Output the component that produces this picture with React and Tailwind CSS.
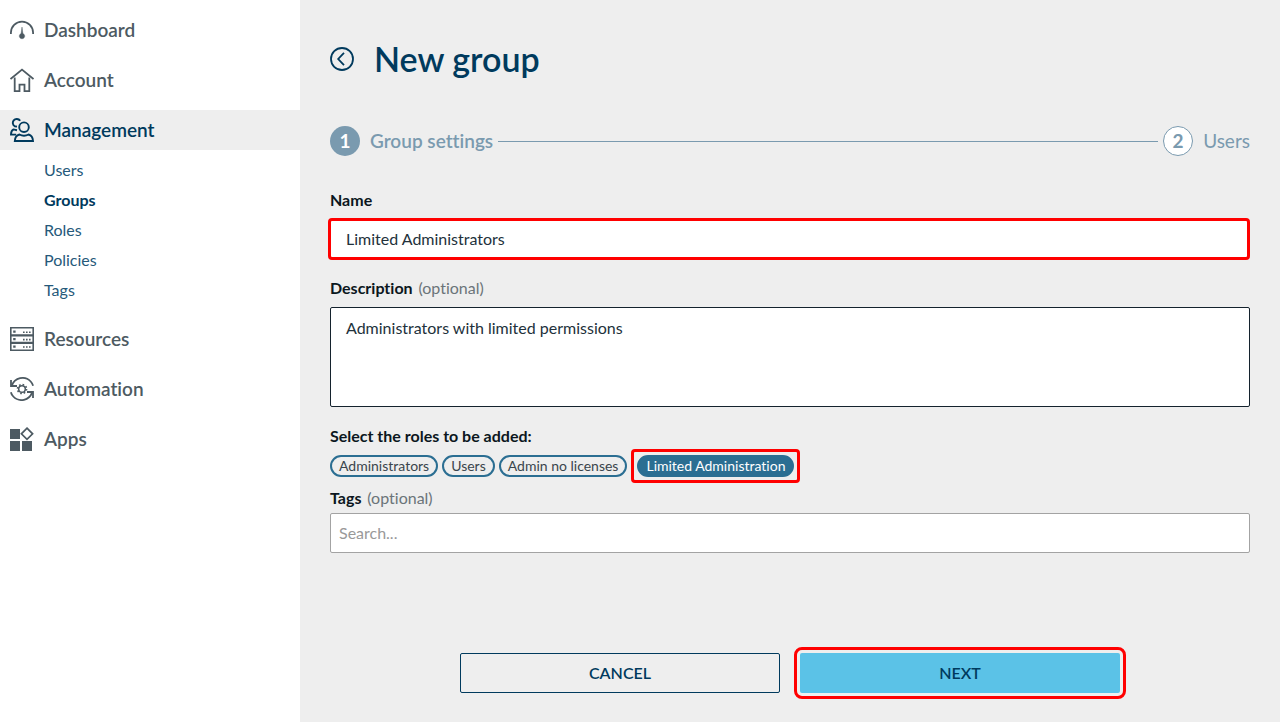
import { useState } from 'react'
import clsx from 'clsx'

function DashboardIcon() {
  return (
    <svg viewBox="0 0 24 24" className="size-6 shrink-0" fill="none" stroke="currentColor" strokeWidth="1.8" aria-hidden="true">
      <path d="M.9 16v-1.200a11.100 11.100 0 0 1 22.200 0V16" />
      <path d="M12 9l.9 6.500a2.700 2.700 0 1 1-1.800 0z" fill="currentColor" strokeWidth=".4" />
    </svg>
  )
}

function AccountIcon() {
  return (
    <svg viewBox="0 0 24 24" className="size-6 shrink-0" fill="none" stroke="currentColor" strokeWidth="1.8" aria-hidden="true">
      <path d="M.5 11L12 1.600 23.500 11" />
      <path d="M4.700 9.500v13.600h4.800v-6.500h5v6.500h4.800V9.500" />
    </svg>
  )
}

function ManagementIcon() {
  return (
    <svg viewBox="0 0 24 24" className="size-6 shrink-0" fill="none" stroke="currentColor" strokeWidth="1.9" aria-hidden="true">
      <circle cx="14" cy="9.200" r="4.800" />
      <path d="M4.800 23c.2-3.600 1.700-5.800 4.600-6.500 3 1.600 6.200 1.600 9.200 0 2.900.7 4.200 2.900 4.400 6.500z" />
      <path d="M10.200 2.800C8.600.6 5.300.4 3.700 2.400c-1.500 1.900-1 4.700 1.100 5.900l2.200.3" />
      <path d="M7 12.200l-3.500-.8C1.800 12.300 1 14 1 16.600h5.200" />
    </svg>
  )
}

function ResourcesIcon() {
  return (
    <svg viewBox="0 0 24 24" className="size-6 shrink-0" fill="none" stroke="currentColor" strokeWidth="1.6" aria-hidden="true">
      <path d="M.8.800h22.400v22.400H.8z" />
      <path d="M.8 8.300h22.400M.8 15.800h22.400" strokeWidth="2.200" />
      <path d="M3.200 4.700h2.400M3.200 12.200h2.400M3.200 19.600h2.400" strokeWidth="2.200" />
      <path d="M13 5.200h8M13 12.600h8M13 20h8" strokeDasharray="1.600 1.400" />
    </svg>
  )
}

function AutomationIcon() {
  return (
    <svg viewBox="0 0 24 24" className="size-6 shrink-0" fill="none" stroke="currentColor" strokeWidth="1.8" aria-hidden="true">
      <path d="M1.900 8.400C4.700.9 14.600-1.900 20.700 4.500c1.200 1.300 2 2.600 2.400 4.300" />
      <path d="M1 3v6h6" />
      <path d="M22.100 15.600C19.300 23.100 9.400 25.900 3.300 19.500 2.100 18.200 1.300 16.900.9 15.200" />
      <path d="M23 21v-6h-6" />
      <circle cx="12" cy="12" r="3.300" strokeWidth="1.500" />
      <circle cx="12" cy="12" r="4.500" strokeWidth="1.700" strokeDasharray="1.600 1.934" />
    </svg>
  )
}

function AppsIcon() {
  return (
    <svg viewBox="0 0 24 24" className="size-6 shrink-0" fill="currentColor" aria-hidden="true">
      <path d="M0 2h10v10H0zM0 14h10v10H0zM12 14h10v10H12z" />
      <path d="M17 1.200l5.600 5.600-5.600 5.600-5.600-5.600z" fill="none" stroke="currentColor" strokeWidth="1.700" />
    </svg>
  )
}

const navItems = [
  { label: 'Dashboard', icon: DashboardIcon },
  { label: 'Account', icon: AccountIcon },
  {
    label: 'Management',
    icon: ManagementIcon,
    active: true,
    children: ['Users', 'Groups', 'Roles', 'Policies', 'Tags'],
  },
  { label: 'Resources', icon: ResourcesIcon },
  { label: 'Automation', icon: AutomationIcon },
  { label: 'Apps', icon: AppsIcon },
]

const roles = ['Administrators', 'Users', 'Admin no licenses', 'Limited Administration']

function Sidebar() {
  return (
    <nav className="w-[300px] shrink-0 bg-white pt-2.5">
      <ul className="space-y-2.5">
        {navItems.map(({ label, icon: Icon, active, children }) => (
          <li key={label}>
            <a
              href="#"
              className={clsx(
                'flex h-10 items-center gap-2.5 px-2.5 text-[19px] font-semibold',
                active ? 'bg-[#eeeeee] text-[#003a5d]' : 'text-[#4d5a62]'
              )}
            >
              <Icon />
              {label}
            </a>
            {children && (
              <ul className="pt-[5px] pb-1">
                {children.map((child) => (
                  <li key={child}>
                    <a
                      href="#"
                      className={clsx(
                        'flex h-[30px] items-center pl-11 text-base',
                        child === 'Groups' ? 'font-bold text-[#003a5d]' : 'text-[#26597a]'
                      )}
                    >
                      {child}
                    </a>
                  </li>
                ))}
              </ul>
            )}
          </li>
        ))}
      </ul>
    </nav>
  )
}

function Steps() {
  return (
    <ol className="mt-[47px] flex h-[30px] items-center text-[19px] text-[#7a9aaf]">
      <li className="flex items-center gap-2.5 font-semibold">
        <span className="flex size-[30px] items-center justify-center rounded-full bg-[#7a9aaf] font-bold text-white">1</span>
        Group settings
      </li>
      <li className="mx-[5px] h-px flex-1 bg-[#7a9aaf]" aria-hidden="true" />
      <li className="flex items-center gap-2.5">
        <span className="flex size-[30px] items-center justify-center rounded-full border border-[#7a9aaf] bg-white font-bold">2</span>
        Users
      </li>
    </ol>
  )
}

function RoleChip({ label, selected, onClick }) {
  const chip = (
    <button
      type="button"
      aria-pressed={selected}
      onClick={onClick}
      className={clsx(
        'h-[22px] rounded-full border-2 border-[#2b6e92] px-[7px] text-sm leading-[18px]',
        selected ? 'bg-[#2b6e92] text-white' : 'text-[#3a454c]'
      )}
    >
      {label}
    </button>
  )
  if (!selected) return chip
  return <span className="-my-1.5 flex rounded border-3 border-[#ff0000] p-[3px]">{chip}</span>
}

export default function App() {
  const [name, setName] = useState('Limited Administrators')
  const [description, setDescription] = useState('Administrators with limited permissions')
  const [selected, setSelected] = useState('Limited Administration')

  return (
    <div className="flex min-h-screen bg-[#eeeeee] font-['Lato','Open_Sans',sans-serif] [font-variant-ligatures:none]">
      <Sidebar />

      <main className="min-w-0 flex-1 px-[30px] pt-[39px]">
        <div className="flex h-10 items-center gap-5 text-[#003a5d]">
          <button type="button" aria-label="Back">
            <svg viewBox="0 0 24 24" className="size-6" fill="none" stroke="currentColor" strokeWidth="1.800" aria-hidden="true">
              <circle cx="12" cy="12" r="11" />
              <path d="M14 5.800L8.200 12l5.800 6.200" />
            </svg>
          </button>
          <h1 className="text-[34px] leading-10 font-semibold">New group</h1>
        </div>

        <Steps />

        <form onSubmit={(e) => e.preventDefault()} className="mt-[34px] text-base leading-5 text-[#22313b]">
          <label htmlFor="name" className="block font-bold text-[#0b1620]">Name</label>
          <div className="mt-2 -ml-0.5">
            <input
              id="name"
              value={name}
              onChange={(e) => setName(e.target.value)}
              className="block h-[42px] w-full rounded border-3 border-[#ff0000] bg-white px-[15px] pb-0.5"
            />
          </div>

          <label htmlFor="description" className="mt-[18px] block font-bold text-[#0b1620]">
            Description <span className="ml-0.5 font-normal text-[#6b7479]">(optional)</span>
          </label>
          <textarea
            id="description"
            value={description}
            onChange={(e) => setDescription(e.target.value)}
            className="mt-[9px] block h-[100px] w-full resize-none rounded-xs border border-[#14222d] bg-white px-[15px] py-2.5"
          />

          <p className="mt-[19px] font-bold text-[#0b1620]">Select the roles to be added:</p>
          <div className="mt-[9px] flex flex-wrap items-center gap-1">
            {roles.map((role) => (
              <RoleChip key={role} label={role} selected={role === selected} onClick={() => setSelected(role)} />
            ))}
          </div>

          <label htmlFor="tags" className="mt-[11px] block font-bold text-[#0b1620]">
            Tags <span className="ml-0.5 font-normal text-[#6b7479]">(optional)</span>
          </label>
          <input
            id="tags"
            placeholder="Search..."
            className="mt-[5px] block h-10 w-full rounded-xs border border-[#a3a3a3] bg-white px-2 pb-0.5 placeholder:text-[#999999]"
          />

          <div className="mt-[100px] flex justify-center gap-5 pb-7 text-[#003a5d]">
            <button type="button" className="h-10 w-80 rounded-xs border border-[#003a5d] font-semibold">
              CANCEL
            </button>
            <button type="submit" className="h-10 w-80 rounded-xs bg-[#5bc2e7] font-semibold outline-3 outline-offset-3 outline-[#ff0000]">
              NEXT
            </button>
          </div>
        </form>
      </main>
    </div>
  )
}
